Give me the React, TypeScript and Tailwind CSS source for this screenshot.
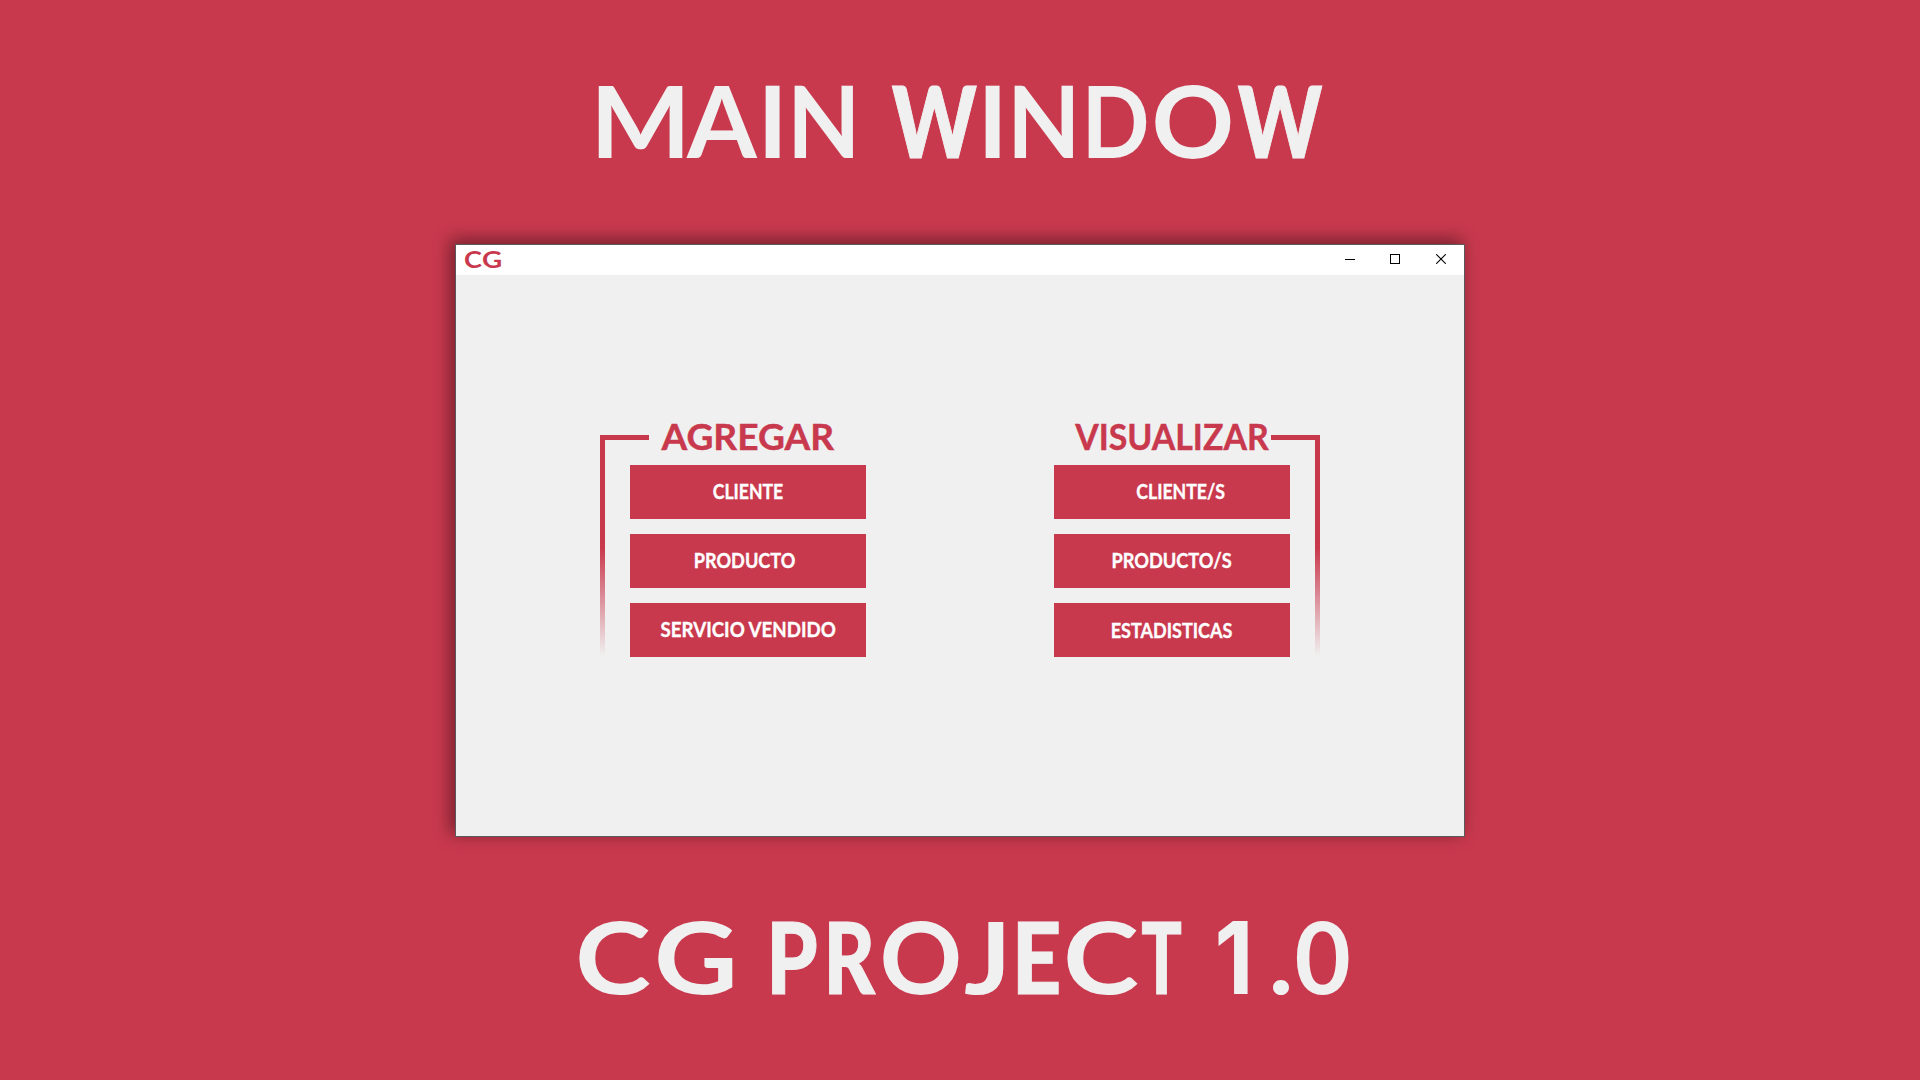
import { clsx } from "clsx";

// x = left edge of the letter, w = its drawn width (both in px inside the word mark),
// ink = left and right bearing edges of the glyph at 100px.
type Glyph = { c: string; x: number; w: number; ink: [number, number]; face?: "heavy" | "inter" };

const MAIN: Glyph[] = [
  { c: "M", x: 598.5, w: 83, ink: [8.3, 86.3] },
  { c: "A", x: 687, w: 69.5, ink: [0, 69.2] },
  { c: "I", x: 766, w: 14, ink: [8.3, 22] },
  { c: "N", x: 795, w: 58, ink: [8.3, 69] },
];
const WINDOW: Glyph[] = [
  { c: "W", x: 892, w: 84, ink: [0.3, 104.7], face: "heavy" },
  { c: "I", x: 986, w: 14, ink: [8.3, 22] },
  { c: "N", x: 1015, w: 58, ink: [8.3, 69] },
  { c: "D", x: 1089, w: 57.5, ink: [8.3, 72.5] },
  { c: "O", x: 1155.3, w: 75.2, ink: [3.5, 77] },
  { c: "W", x: 1238.5, w: 83.5, ink: [0.3, 104.7], face: "heavy" },
];
const CG: Glyph[] = [
  { c: "C", x: 579.3, w: 70, ink: [3.5, 64.5] },
  { c: "G", x: 658, w: 74, ink: [3.5, 67.5] },
];
const PROJECT: Glyph[] = [
  { c: "P", x: 773.5, w: 42, ink: [8.3, 59.5], face: "heavy" },
  { c: "R", x: 830.5, w: 45, ink: [8.3, 65], face: "heavy" },
  { c: "O", x: 883.3, w: 75.2, ink: [3.5, 77] },
  { c: "J", x: 965, w: 38, ink: [1, 35.5] },
  { c: "E", x: 1019.5, w: 39, ink: [8.3, 53.5], face: "heavy" },
  { c: "C", x: 1067, w: 70, ink: [3.5, 64.5] },
  { c: "T", x: 1142.5, w: 39, ink: [1, 59], face: "heavy" },
];
const VERSION: Glyph[] = [
  { c: "1", x: 1220, w: 28, ink: [6, 37], face: "inter" },
  { c: ".", x: 1273, w: 16, ink: [4.3, 19.5] },
  { c: "0", x: 1297.5, w: 51.5, ink: [2.5, 55.5] },
];
const LOGO: Glyph[] = [
  { c: "C", x: 0, w: 16.5, ink: [0.8, 14.8] },
  { c: "G", x: 18.7, w: 17.8, ink: [0.8, 15.5] },
];

function Word({ glyphs, end }: { glyphs: Glyph[]; end: number }) {
  return (
    <span className="flex items-baseline">
      {glyphs.map((g, i) => {
        const next = i + 1 < glyphs.length ? glyphs[i + 1].x : end;
        const s = g.w / (g.ink[1] - g.ink[0]);
        return (
          <span key={i} className="block shrink-0 whitespace-pre" style={{ width: next - g.x }}>
            <span
              className={clsx(
                "inline-block origin-left",
                g.face === "heavy" && "font-black [-webkit-text-stroke:1px_#f0f0f0]",
                g.face === "inter" && "font-['Inter']",
              )}
              style={{ transform: `translateX(${-g.ink[0] * s}px) scaleX(${s})` }}
            >
              {g.c}
            </span>
          </span>
        );
      })}
    </span>
  );
}

function Option({ label, className }: { label: string; className: string }) {
  return (
    <button className="flex h-[54px] w-[236px] items-center justify-center bg-[#c9394e] pb-[2px] text-[20px] leading-none text-white [-webkit-text-stroke:0.35px_#fff]">
      <span className={clsx("block whitespace-nowrap", className)}>{label}</span>
    </button>
  );
}

function Rail({ side }: { side: "left" | "right" }) {
  return (
    <div className={clsx("flex h-[221px] w-[49px] flex-col", side === "left" ? "items-start" : "items-end")}>
      <div className="h-[5px] w-full bg-[#c9394e]" />
      <div className="w-[5px] flex-1 bg-linear-to-b from-[#c9394e] from-50% to-[#c9394e]/0" />
    </div>
  );
}

function Heading({ label, className }: { label: string; className: string }) {
  return (
    <h2 className="flex h-[45px] w-[236px] items-start justify-center pt-[3px] text-[36px] leading-[26px] text-[#c9394e] [-webkit-text-stroke:0.4px_#c9394e]">
      <span className={clsx("block", className)}>{label}</span>
    </h2>
  );
}

export default function App() {
  return (
    <main className="flex h-[1080px] w-[1920px] flex-col overflow-hidden bg-[#c9394e] font-['Lato',sans-serif] font-bold">
      <h1 className="flex h-[244px] pt-[83px] pl-[598.5px] text-[100px] leading-[72px] text-[#f0f0f0]">
        <Word glyphs={MAIN} end={892} />
        <Word glyphs={WINDOW} end={1330} />
      </h1>

      <section className="ml-[455px] flex h-[593px] w-[1010px] flex-col border border-[#5a5a5c] bg-[#f0f0f0] shadow-[-4px_-4px_16px_1px_rgba(0,0,0,0.42)]">
        <header className="flex h-[30px] items-start justify-between bg-white">
          <div className="flex pt-[6px] pl-[8.5px] text-[23px] leading-[17px] text-[#c9394e]">
            <Word glyphs={LOGO} end={40} />
          </div>
          <div className="flex pr-[18px] pt-[9px] text-black">
            <svg width="10" height="10" viewBox="0 0 10 10" className="mr-[35px]" shapeRendering="crispEdges">
              <rect y="5" width="10" height="1" fill="currentColor" />
            </svg>
            <svg width="10" height="10" viewBox="0 0 10 10" className="mr-[36px]" shapeRendering="crispEdges">
              <rect x="0.5" y="0.5" width="9" height="9" fill="none" stroke="currentColor" />
            </svg>
            <svg width="10" height="10" viewBox="0 0 10 10">
              <path d="M0.2 0.2 9.8 9.8M9.8 0.2 0.2 9.8" stroke="currentColor" strokeWidth="1.1" />
            </svg>
          </div>
        </header>

        <div className="flex justify-between px-[144px] pt-[145px]">
          <div className="flex">
            <div className="w-[30px] pt-[15px]">
              <Rail side="left" />
            </div>
            <div>
              <Heading label="AGREGAR" className="scale-x-[1.03]" />
              <div className="flex flex-col gap-[15px]">
                <Option label="CLIENTE" className="scale-x-[0.88]" />
                <Option label="PRODUCTO" className="-translate-x-[3.5px] scale-x-[0.905]" />
                <Option label="SERVICIO VENDIDO" className="translate-x-[0.5px] scale-x-[0.935]" />
              </div>
            </div>
          </div>

          <div className="flex">
            <div>
              <Heading label="VISUALIZAR" className="scale-x-[0.94]" />
              <div className="flex flex-col gap-[15px]">
                <Option label="CLIENTE/S" className="translate-x-[8.5px] scale-x-[0.885]" />
                <Option label="PRODUCTO/S" className="-translate-x-[0.5px] scale-x-[0.91]" />
                <Option label="ESTADISTICAS" className="translate-y-px scale-x-[0.9]" />
              </div>
            </div>
            <div className="flex w-[30px] justify-end pt-[15px]">
              <div className="shrink-0">
                <Rail side="right" />
              </div>
            </div>
          </div>
        </div>
      </section>

      <p className="flex pt-[82px] pl-[579.3px] text-[100px] leading-[72px] text-[#f0f0f0]">
        <Word glyphs={CG} end={773.5} />
        <Word glyphs={PROJECT} end={1220} />
        <Word glyphs={VERSION} end={1360} />
      </p>
    </main>
  );
}
